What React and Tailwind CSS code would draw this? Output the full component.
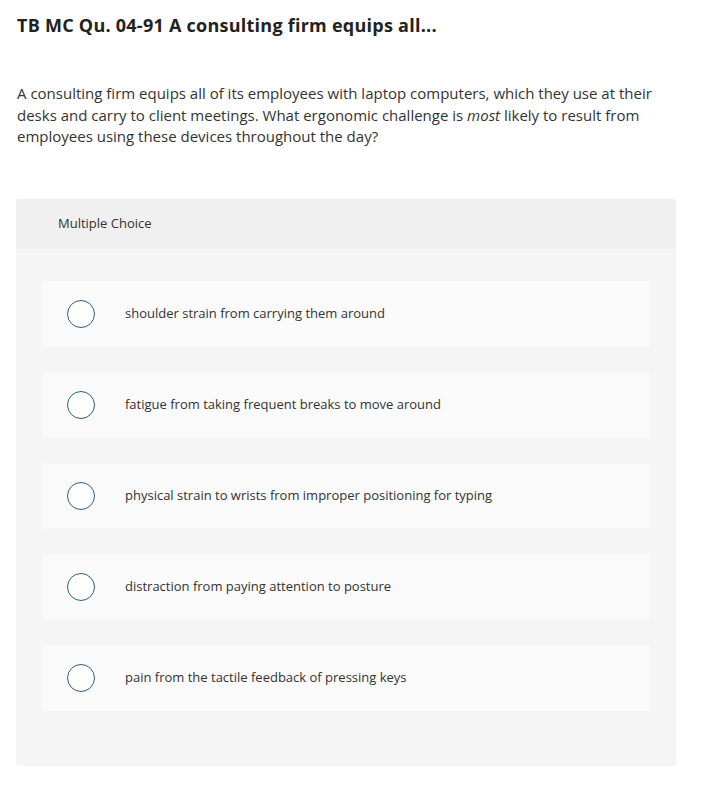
import React from "react";

const choices = [
  "shoulder strain from carrying them around",
  "fatigue from taking frequent breaks to move around",
  "physical strain to wrists from improper positioning for typing",
  "distraction from paying attention to posture",
  "pain from the tactile feedback of pressing keys",
];

export default function App() {
  return (
    <div className="min-h-[786px] bg-white text-[#1a1a1a]" style={{ fontFamily: "'Open Sans', Lato, sans-serif" }}>
      <div className="pl-[17px] pt-[13px]">
        <h1 className="text-[18px] font-bold leading-[24px] tracking-[0.25px] text-[#222]">
          TB MC Qu. 04-91 A consulting firm equips all...
        </h1>
        <p className="mt-[46px] w-[640px] text-[15px] leading-[21.5px] text-[#333]">
          A consulting firm equips all of its employees with laptop computers, which they use at their desks and carry
          to client meetings. What ergonomic challenge is <em>most</em> likely to result from employees using these
          devices throughout the day?
        </p>
      </div>

      <div className="mx-[16px] mt-[51px] w-[660px] overflow-hidden rounded-[3px] bg-[#f5f5f5]">
        <div className="flex h-[50px] items-center bg-[#f0f0f0] pl-[42px] text-[13px] text-[#333]">Multiple Choice</div>
        <div className="flex flex-col gap-[25px] px-[26px] pb-[55px] pt-[32px]">
          {choices.map((c) => (
            <label key={c} className="flex h-[66px] items-center rounded-[3px] bg-[#fafafa] pl-[25px]">
              <span className="h-[28px] w-[28px] shrink-0 rounded-full border-[1.5px] border-[#2f5b8a] bg-white" />
              <span className="ml-[30px] text-[13px] text-[#333]">{c}</span>
            </label>
          ))}
        </div>
      </div>
    </div>
  );
}
